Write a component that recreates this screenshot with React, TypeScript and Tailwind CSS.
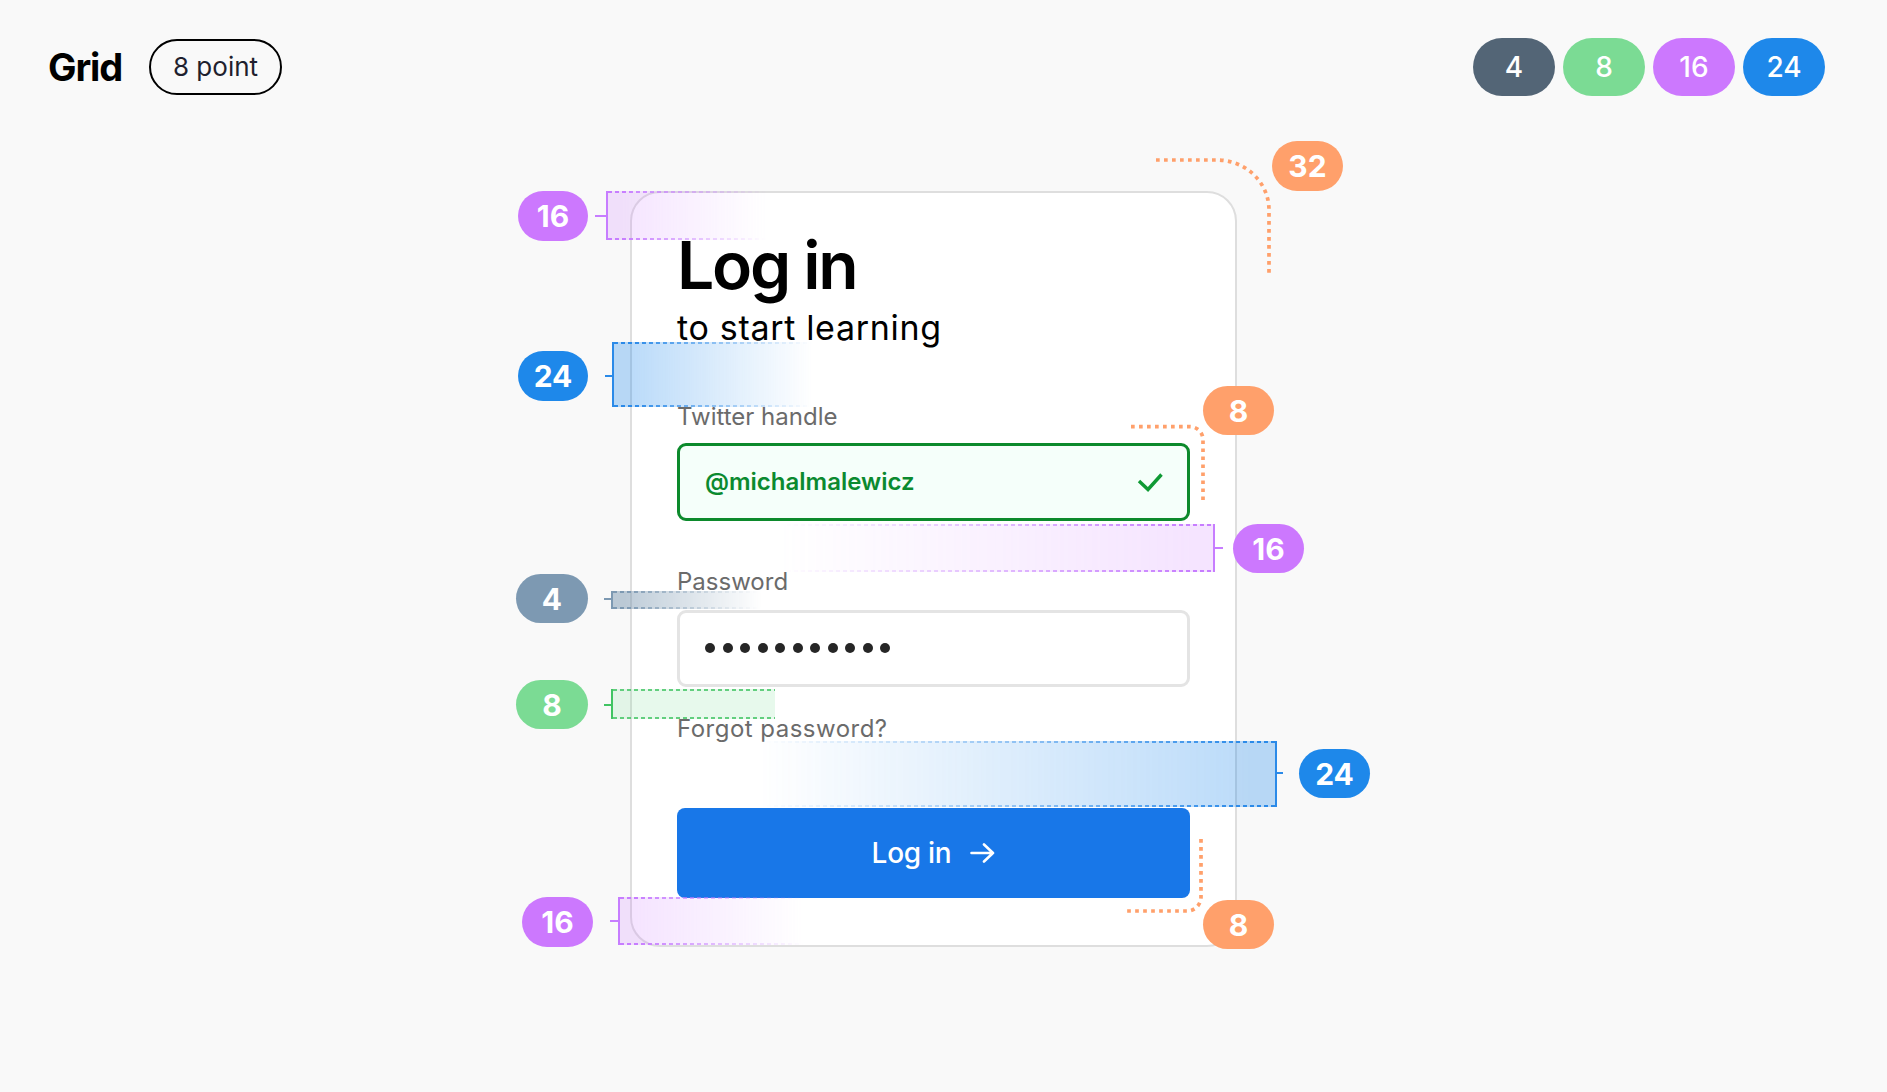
import React from "react";

function Badge({ className, children }: { className: string; children: React.ReactNode }) {
  return (
    <div
      className={`absolute flex items-center justify-center rounded-full text-white text-[30px] font-bold leading-none ${className}`}
    >
      {children}
    </div>
  );
}

function PillTop({ className, children }: { className: string; children: React.ReactNode }) {
  return (
    <div
      className={`flex h-[58px] w-[82px] items-center justify-center rounded-full text-[28px] font-medium leading-none text-white ${className}`}
    >
      {children}
    </div>
  );
}

export default function App() {
  return (
    <div className="relative h-[1092px] w-[1887px] overflow-hidden bg-[#f9f9f9] [font-family:Inter,'Noto_Sans',sans-serif] text-black">
      {/* Header */}
      <header className="flex items-center justify-between pl-[48px] pr-[62px] pt-[38px]">
        <div className="flex items-center gap-[27px]">
          <span className="text-[38px] font-bold leading-none tracking-[-0.03em]">Grid</span>
          <span className="flex h-[56px] items-center rounded-full border-2 border-black px-[22px] text-[26px] leading-none text-[#1f1f2e]">
            8 point
          </span>
        </div>
        <div className="flex items-center gap-[8px]">
          <PillTop className="bg-[#536576]">4</PillTop>
          <PillTop className="bg-[#7bdb94]">8</PillTop>
          <PillTop className="bg-[#cc78fe]">16</PillTop>
          <PillTop className="bg-[#1e88ea]">24</PillTop>
        </div>
      </header>

      {/* Card */}
      <div className="ml-[630px] mt-[95px] flex w-[607px] flex-col rounded-[30px] border-2 border-[#dedede] bg-white px-[45px] pb-[47px] pt-[39px]">
        <h1 className="text-[66px] font-semibold leading-none tracking-[-0.035em]">Log in</h1>
        <p className="mt-[13px] text-[34px] leading-none tracking-[0.02em]">to start learning</p>

        <label className="mt-[59.5px] text-[24px] leading-none text-[#6b6b6b]">Twitter handle</label>
        <div className="mt-[14.7px] flex h-[78px] items-center justify-between rounded-[9px] border-[3px] border-[#0c8a2c] bg-[#f5fffa] pl-[25px] pr-[23px]">
          <span className="text-[24px] font-semibold leading-none text-[#0b8a2f]">@michalmalewicz</span>
          <svg width="27" height="20" viewBox="0 0 27 20" fill="none">
            <path d="M2 9 L11 17.5 L24.5 2.5" stroke="#0f9a34" strokeWidth="3.4" />
          </svg>
        </div>

        <label className="mt-[48.5px] text-[24px] leading-none text-[#6b6b6b]">Password</label>
        <div className="mt-[16px] flex h-[77px] items-center rounded-[9px] border-[3px] border-[#e4e4e4] bg-white pl-[25px]">
          <div className="flex items-center gap-[7.5px]">
            {Array.from({ length: 11 }).map((_, i) => (
              <span key={i} className="h-[10px] w-[10px] rounded-full bg-[#262626]" />
            ))}
          </div>
        </div>

        <span className="mt-[30px] text-[24px] leading-none tracking-[0.02em] text-[#6b6b6b]">Forgot password?</span>

        <button className="mt-[67px] flex h-[90px] items-center justify-center gap-[19px] rounded-[8px] bg-[#1877e8] text-[28px] font-medium leading-none tracking-[-0.01em] text-white">
          <span>Log in</span>
          <svg width="25" height="20" viewBox="0 0 25 20" fill="none">
            <path d="M1.5 10 H23 M14 1.5 L23 10 L14 18.5" stroke="white" strokeWidth="2.6" strokeLinecap="round" strokeLinejoin="round" />
          </svg>
        </button>
      </div>

      {/* Annotation boxes: left anchored */}
      <div className="absolute left-[606px] top-[191px] flex h-[49px] w-[160px] [-webkit-mask-image:linear-gradient(to_right,black_10%,transparent)] [mask-image:linear-gradient(to_right,black_10%,transparent)]">
        <div className="w-[2px] bg-[#c77dff]" />
        <div className="flex flex-1 flex-col justify-between bg-[rgba(204,120,254,0.2)]">
          <div className="h-[2px] bg-[repeating-linear-gradient(to_right,#c77dff_0_4px,transparent_4px_7px)]" />
          <div className="h-[2px] bg-[repeating-linear-gradient(to_right,#c77dff_0_4px,transparent_4px_7px)]" />
        </div>
      </div>

      <div className="absolute left-[612px] top-[342px] flex h-[65px] w-[200px] [-webkit-mask-image:linear-gradient(to_right,black_10%,transparent)] [mask-image:linear-gradient(to_right,black_10%,transparent)]">
        <div className="w-[2px] bg-[#2b8ae8]" />
        <div className="flex flex-1 flex-col justify-between bg-[rgba(30,136,234,0.3)]">
          <div className="h-[2px] bg-[repeating-linear-gradient(to_right,#2b8ae8_0_4px,transparent_4px_7px)]" />
          <div className="h-[2px] bg-[repeating-linear-gradient(to_right,#2b8ae8_0_4px,transparent_4px_7px)]" />
        </div>
      </div>

      <div className="absolute left-[611px] top-[590.5px] flex h-[18px] w-[150px] [-webkit-mask-image:linear-gradient(to_right,black_10%,transparent)] [mask-image:linear-gradient(to_right,black_10%,transparent)]">
        <div className="w-[2px] bg-[#7d99b2]" />
        <div className="flex flex-1 flex-col justify-between bg-[rgba(125,153,178,0.5)]">
          <div className="h-[2px] bg-[repeating-linear-gradient(to_right,#7d99b2_0_4px,transparent_4px_7px)]" />
          <div className="h-[2px] bg-[repeating-linear-gradient(to_right,#7d99b2_0_4px,transparent_4px_7px)]" />
        </div>
      </div>

      <div className="absolute left-[611px] top-[689px] flex h-[30px] w-[164px]">
        <div className="w-[2px] bg-[#41c463]" />
        <div className="flex flex-1 flex-col justify-between bg-[rgba(123,219,148,0.18)]">
          <div className="h-[2px] bg-[repeating-linear-gradient(to_right,rgba(65,196,99,0.8)_0_4px,transparent_4px_7px)]" />
          <div className="h-[2px] bg-[repeating-linear-gradient(to_right,rgba(65,196,99,0.8)_0_4px,transparent_4px_7px)]" />
        </div>
      </div>

      <div className="absolute left-[618px] top-[897px] flex h-[48px] w-[185px] [-webkit-mask-image:linear-gradient(to_right,black_10%,transparent)] [mask-image:linear-gradient(to_right,black_10%,transparent)]">
        <div className="w-[2px] bg-[#c77dff]" />
        <div className="flex flex-1 flex-col justify-between bg-[rgba(204,120,254,0.2)]">
          <div className="h-[2px] bg-[repeating-linear-gradient(to_right,#c77dff_0_4px,transparent_4px_7px)]" />
          <div className="h-[2px] bg-[repeating-linear-gradient(to_right,#c77dff_0_4px,transparent_4px_7px)]" />
        </div>
      </div>

      {/* Annotation boxes: right anchored */}
      <div className="absolute left-[780px] top-[524px] flex h-[48px] w-[435px] [-webkit-mask-image:linear-gradient(to_left,black_5%,transparent)] [mask-image:linear-gradient(to_left,black_5%,transparent)]">
        <div className="flex flex-1 flex-col justify-between bg-[rgba(204,120,254,0.2)]">
          <div className="h-[2px] bg-[repeating-linear-gradient(to_right,#c77dff_0_4px,transparent_4px_7px)]" />
          <div className="h-[2px] bg-[repeating-linear-gradient(to_right,#c77dff_0_4px,transparent_4px_7px)]" />
        </div>
        <div className="w-[2px] bg-[#c77dff]" />
      </div>

      <div className="absolute left-[760px] top-[741px] flex h-[66px] w-[517px] [-webkit-mask-image:linear-gradient(to_left,black_5%,transparent)] [mask-image:linear-gradient(to_left,black_5%,transparent)]">
        <div className="flex flex-1 flex-col justify-between bg-[rgba(30,136,234,0.3)]">
          <div className="h-[2px] bg-[repeating-linear-gradient(to_right,#2b8ae8_0_4px,transparent_4px_7px)]" />
          <div className="h-[2px] bg-[repeating-linear-gradient(to_right,#2b8ae8_0_4px,transparent_4px_7px)]" />
        </div>
        <div className="w-[2px] bg-[#2b8ae8]" />
      </div>

      {/* Connector ticks */}
      <div className="absolute left-[595px] top-[215px] h-[2px] w-[11px] bg-[#c77dff]" />
      <div className="absolute left-[605px] top-[375px] h-[2px] w-[7px] bg-[#2b8ae8]" />
      <div className="absolute left-[604px] top-[598px] h-[2px] w-[7px] bg-[#7d99b2]" />
      <div className="absolute left-[604px] top-[704px] h-[2px] w-[7px] bg-[#41c463]" />
      <div className="absolute left-[610px] top-[920px] h-[2px] w-[8px] bg-[#c77dff]" />
      <div className="absolute left-[1215px] top-[546.5px] h-[2px] w-[8px] bg-[#c77dff]" />
      <div className="absolute left-[1277px] top-[772px] h-[2px] w-[6px] bg-[#2b8ae8]" />

      {/* Orange dotted radius guides */}
      <svg className="pointer-events-none absolute left-0 top-0" width="1887" height="1092" fill="none">
        <path d="M1156 160 H1217 A52 50 0 0 1 1269 210 V277" stroke="#ffa06b" strokeWidth="3.7" strokeDasharray="3.7 4.3" />
        <path d="M1131 426.7 H1190 A13 13 0 0 1 1203 439.7 V502" stroke="#ffa06b" strokeWidth="3.7" strokeDasharray="3.7 4.3" />
        <path d="M1201 839 V897 A14 14 0 0 1 1187 911 H1125" stroke="#ffa06b" strokeWidth="3.7" strokeDasharray="3.7 4.3" />
      </svg>

      {/* Badges */}
      <Badge className="left-[518px] top-[191px] h-[50px] w-[70px] bg-[#cc78fe]">16</Badge>
      <Badge className="left-[518px] top-[351px] h-[50px] w-[70px] bg-[#1e88ea]">24</Badge>
      <Badge className="left-[516px] top-[574px] h-[49px] w-[72px] bg-[#7d99b2]">4</Badge>
      <Badge className="left-[516px] top-[680px] h-[49px] w-[72px] bg-[#7bdb94]">8</Badge>
      <Badge className="left-[522px] top-[897px] h-[50px] w-[71px] bg-[#cc78fe]">16</Badge>
      <Badge className="left-[1272px] top-[141px] h-[50px] w-[71px] bg-[#ffa06b]">32</Badge>
      <Badge className="left-[1203px] top-[386px] h-[49px] w-[71px] bg-[#ffa06b]">8</Badge>
      <Badge className="left-[1233px] top-[524px] h-[49px] w-[71px] bg-[#cc78fe]">16</Badge>
      <Badge className="left-[1299px] top-[749px] h-[49px] w-[71px] bg-[#1e88ea]">24</Badge>
      <Badge className="left-[1203px] top-[900px] h-[49px] w-[71px] bg-[#ffa06b]">8</Badge>
    </div>
  );
}
